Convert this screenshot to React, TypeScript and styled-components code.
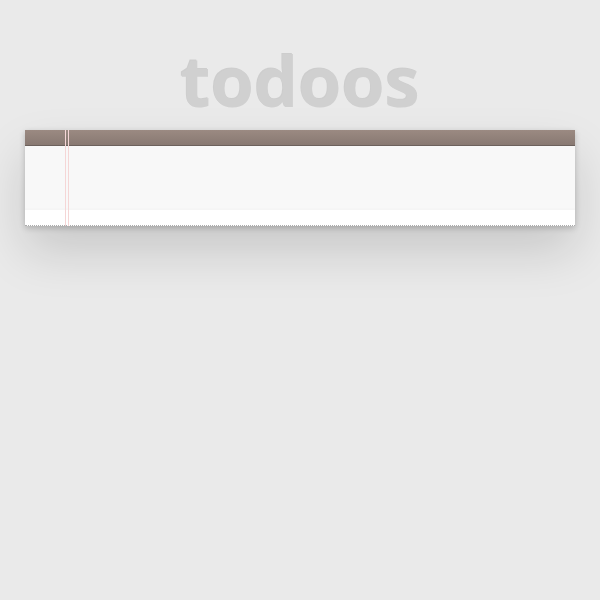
import styled, { createGlobalStyle } from 'styled-components';

const GlobalStyle = createGlobalStyle`
  html, body {
    margin: 0;
    padding: 0;
    background: #eaeaea;
    font-family: "Open Sans", "Liberation Sans", sans-serif;
  }
`;

const Page = styled.div`
  display: flex;
  flex-direction: column;
  align-items: center;
  box-sizing: border-box;
  min-height: 100vh;
  padding-top: 45px;
`;

const Title = styled.h1`
  margin: 0 0 15px;
  font-size: 70px;
  line-height: 70px;
  font-weight: 700;
  color: #d0d0d0;
  text-shadow: -1px -1px rgba(0, 0, 0, 0.12);
`;

const TodoApp = styled.section`
  position: relative;
  width: 550px;
  background: #fff;
  box-shadow: 0 2px 6px 0 rgba(0, 0, 0, 0.2), 0 25px 50px 0 rgba(0, 0, 0, 0.15);

  &::before {
    content: '';
    position: absolute;
    top: 0;
    left: 40px;
    width: 2px;
    height: 100%;
    border-left: 1px solid #f5d6d6;
    border-right: 1px solid #f5d6d6;
  }
`;

const HeaderBar = styled.div`
  height: 15px;
  background: linear-gradient(#9b8a82, #887972);
  border-bottom: 1px solid #6c615c;
`;

const NewTodo = styled.input`
  display: block;
  box-sizing: border-box;
  width: 100%;
  height: 64px;
  margin: 0;
  padding: 16px 16px 16px 60px;
  border: none;
  outline: none;
  font-family: inherit;
  font-size: 24px;
  background: #f8f8f8;
  box-shadow: inset 0 -2px 1px rgba(0, 0, 0, 0.01);
`;

const Spacer = styled.div`
  height: 15px;
`;

const Main = styled.div`
  border-top: 1px dotted #adadad;
`;

export default function App() {
  return (
    <>
      <GlobalStyle />
      <Page>
        <Title>todoos</Title>
        <TodoApp>
          <HeaderBar />
          <NewTodo aria-label="New todo" />
          <Spacer />
          <Main />
        </TodoApp>
      </Page>
    </>
  );
}
